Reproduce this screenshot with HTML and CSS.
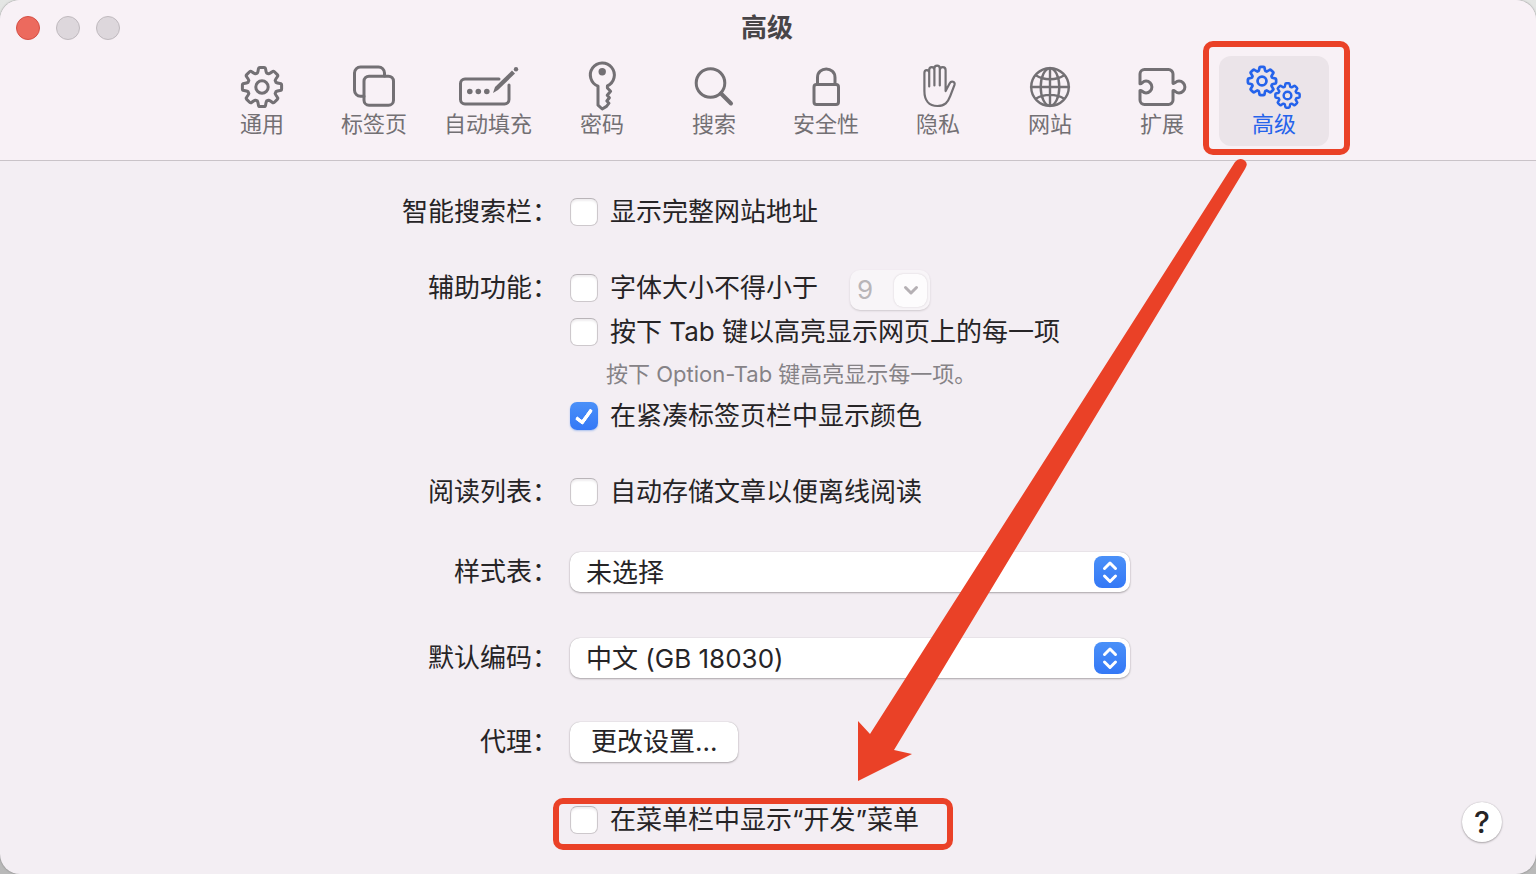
FILE: index.html
```
<!DOCTYPE html>
<html lang="zh-CN">
<head>
<meta charset="utf-8">
<meta name="viewport" content="width=device-width, initial-scale=1">
<title>高级</title>
<link rel="stylesheet" href="styles.css">
</head>
<body>
<svg class="defs" aria-hidden="true">
  <symbol id="gear" viewBox="-25 -25 50 50" overflow="visible">
    <path d="M-4.6-14 Q-4-15-3.6-18 Q-3.4-19.6-2-19.6 H2 Q3.4-19.6 3.6-18 Q4-15 4.6-14 L6.65-13.15 Q8-13.6 10.2-15.3 Q11.4-16.3 12.4-15.3 L15.3-12.4 Q16.3-11.4 15.3-10.2 Q13.6-8 13.15-6.65 L14-4.6 Q15-4 18-3.6 Q19.6-3.4 19.6-2 V2 Q19.6 3.4 18 3.6 Q15 4 14 4.6 L13.15 6.65 Q13.6 8 15.3 10.2 Q16.3 11.4 15.3 12.4 L12.4 15.3 Q11.4 16.3 10.2 15.3 Q8 13.6 6.65 13.15 L4.6 14 Q4 15 3.6 18 Q3.4 19.6 2 19.6 H-2 Q-3.4 19.6-3.6 18 Q-4 15-4.6 14 L-6.65 13.15 Q-8 13.6-10.2 15.3 Q-11.4 16.3-12.4 15.3 L-15.3 12.4 Q-16.3 11.4-15.3 10.2 Q-13.6 8-13.15 6.65 L-14 4.6 Q-15 4-18 3.6 Q-19.6 3.4-19.6 2 V-2 Q-19.6-3.4-18-3.6 Q-15-4-14-4.6 L-13.15-6.65 Q-13.6-8-15.3-10.2 Q-16.3-11.4-15.3-12.4 L-12.4-15.3 Q-11.4-16.3-10.2-15.3 Q-8-13.6-6.65-13.15 Z"/>
    <circle r="6.2"/>
  </symbol>
</svg>
<div class="window">
  <header class="header">
    <div class="titlebar">
      <div class="lights">
        <button class="light light-close" type="button" aria-label="关闭"></button>
        <button class="light" type="button" aria-label="最小化" disabled></button>
        <button class="light" type="button" aria-label="缩放" disabled></button>
      </div>
      <h1 class="title">高级</h1>
    </div>
    <nav class="toolbar">
      <button class="tool" type="button">
        <svg class="icon" viewBox="0 0 60 50"><use href="#gear" x="5" y="0" width="50" height="50"/></svg>
        <span>通用</span>
      </button>
      <button class="tool" type="button">
        <svg class="icon" viewBox="0 0 60 50"><path d="M20 34.3h-3.500a6 6 0 0 1-6-6v-17.300a6 6 0 0 1 6-6h18a6 6 0 0 1 6 6v3"/><rect x="20" y="14.200" width="29.500" height="29" rx="5"/></svg>
        <span>标签页</span>
      </button>
      <button class="tool tool-wide" type="button">
        <svg class="icon" viewBox="0 0 60 50"><path d="M41 17H7a4.500 4.500 0 0 0-4.500 4.500v16A4.500 4.500 0 0 0 7 42h39.500a4.500 4.500 0 0 0 4.500-4.500V23"/><g class="solid"><circle cx="11.800" cy="29.500" r="2.800"/><circle cx="20.300" cy="29.500" r="2.800"/><circle cx="28.800" cy="29.500" r="2.800"/><path d="M35 31l2-6L54 8.600l3 3L40 28z"/><circle cx="58" cy="7.300" r="2.200"/></g></svg>
        <span>自动填充</span>
      </button>
      <button class="tool" type="button">
        <svg class="icon" viewBox="0 0 60 50"><path d="M26 24.200a12 12 0 1 1 9.400-.3v2.100l3.200 3.300-3.400 4 2.200 2.400-2.600 3.300 2.200 2.200-2.500 3.200L30.200 47 26 43.200z"/><circle class="solid" cx="30.200" cy="9.700" r="3.700"/></svg>
        <span>密码</span>
      </button>
      <button class="tool" type="button">
        <svg class="icon" viewBox="0 0 60 50"><circle cx="26.500" cy="21" r="14.300"/><path class="handle" d="M37 31.500L47 41.500"/></svg>
        <span>搜索</span>
      </button>
      <button class="tool" type="button">
        <svg class="icon" viewBox="0 0 60 50"><rect x="18" y="22.500" width="24.500" height="20" rx="2.500"/><path d="M21.500 22v-6.500c0-11.500 17.500-11.500 17.500 0V22"/></svg>
        <span>安全性</span>
      </button>
      <button class="tool" type="button">
        <svg class="icon icon-thin" viewBox="0 0 60 50"><path d="M21.200 24.500V10.800c0-3.700-4.800-3.700-4.800 0V29c0 9.500 4.600 15 13 15 7.600 0 10.500-3.800 12.800-9.800l4.300-11.300c1-3.200-3.200-4.600-4.900-1.400l-4 7.500V10.500M21.200 11V8c0-3.900 5.200-3.900 5.200 0v15.500M26.400 8V6.600c0-4 5.400-4 5.400 0v16.900M31.800 8.200c0-4 5.800-4 5.800 0v3"/></svg>
        <span>隐私</span>
      </button>
      <button class="tool" type="button">
        <svg class="icon icon-globe" viewBox="0 0 60 50"><circle cx="30" cy="25" r="18.800"/><ellipse cx="30" cy="25" rx="9.300" ry="18.800"/><path d="M30 6v38M11 25h38M15.800 13.200c8 5.300 20.400 5.300 28.400 0M15.800 36.800c8-5.300 20.400-5.300 28.400 0"/></svg>
        <span>网站</span>
      </button>
      <button class="tool" type="button">
        <svg class="icon" viewBox="0 0 60 50"><path d="M8 21.800V12a4.500 4.500 0 0 1 4.500-4.500h24A4.500 4.500 0 0 1 41 12v9.300c1.800.8 2.400-2.200 6-2.200a5.900 5.900 0 0 1 0 11.800c-3.600 0-4.200-3-6-2.200V38a4.500 4.500 0 0 1-4.500 4.500h-24A4.500 4.500 0 0 1 8 38v-9.500c1.800-.8 2.400 2.400 6 2.400a5.900 5.900 0 0 0 0-11.800c-3.600 0-4.200 3.300-6 2.700z"/></svg>
        <span>扩展</span>
      </button>
      <button class="tool tool-active" type="button" aria-current="page">
        <svg class="icon" viewBox="0 0 60 50"><use class="gear-large" href="#gear" x="0" y="1" width="36" height="36"/><use class="gear-small" href="#gear" x="28" y="18" width="31" height="31"/></svg>
        <span>高级</span>
      </button>
    </nav>
  </header>

  <main class="content">
    <form class="form">
      <div class="section">
        <div class="name">智能搜索栏：</div>
        <div class="controls">
          <label class="row"><input class="check" type="checkbox"><span>显示完整网站地址</span></label>
        </div>
      </div>
      <div class="section">
        <div class="name">辅助功能：</div>
        <div class="controls">
          <div class="line">
            <label class="row"><input class="check" type="checkbox"><span>字体大小不得小于</span></label>
            <div class="combo">
              <input class="combo-value" type="text" value="9" aria-label="最小字体大小" disabled>
              <button class="combo-button" type="button" aria-label="选择字体大小" disabled>
                <svg class="chevron" viewBox="0 0 16 16"><path d="M2.500 5.500L8 11l5.500-5.500"/></svg>
              </button>
            </div>
          </div>
          <label class="row"><input class="check" type="checkbox" aria-describedby="tab-hint"><span>按下 Tab 键以高亮显示网页上的每一项</span></label>
          <p class="hint" id="tab-hint">按下 Option-Tab 键高亮显示每一项。</p>
          <label class="row"><input class="check" type="checkbox" checked><span>在紧凑标签页栏中显示颜色</span></label>
        </div>
      </div>
      <div class="section">
        <div class="name">阅读列表：</div>
        <div class="controls">
          <label class="row"><input class="check" type="checkbox"><span>自动存储文章以便离线阅读</span></label>
        </div>
      </div>
      <div class="section section-style">
        <label class="name" for="stylesheet">样式表：</label>
        <div class="popup">
          <select class="select" id="stylesheet"><option>未选择</option></select>
          <svg class="arrows" viewBox="0 0 32 32"><path d="M10.500 12.500L16 7l5.500 5.500M10.500 20L16 25.500 21.500 20"/></svg>
        </div>
      </div>
      <div class="section section-encoding">
        <label class="name" for="encoding">默认编码：</label>
        <div class="popup">
          <select class="select" id="encoding"><option>中文 (GB 18030)</option></select>
          <svg class="arrows" viewBox="0 0 32 32"><path d="M10.500 12.500L16 7l5.500 5.500M10.500 20L16 25.500 21.500 20"/></svg>
        </div>
      </div>
      <div class="section section-proxy">
        <div class="name">代理：</div>
        <div class="line"><button class="push" type="button">更改设置...</button></div>
      </div>
      <div class="section section-develop">
        <div class="name"></div>
        <div class="controls">
          <label class="row row-marked"><input class="check" type="checkbox"><span>在菜单栏中显示“开发”菜单</span></label>
        </div>
      </div>
    </form>
    <button class="help" type="button" aria-label="帮助">?</button>
  </main>
  <svg class="pointer" viewBox="0 0 400 630" aria-hidden="true"><path d="M385 12Q389 7 394 10Q399 13 395 19L44 600L62 604L8 631V571L20 584Z"/></svg>
</div>
</body>
</html>
```
FILE: styles.css
```
* {
  box-sizing: border-box;
}

body {
  margin: 0;
  background: linear-gradient(#e4e6e4, #b9b9b9);
  color: #262426;
  font-family: Inter, "Noto Sans CJK SC", sans-serif;
  font-size: 26px;
}

button,
input,
select {
  margin: 0;
  padding: 0;
  border: 0;
  color: inherit;
  font: inherit;
}

.defs {
  position: absolute;
  width: 0;
  height: 0;
}

.window {
  position: relative;
  display: flex;
  flex-direction: column;
  min-height: 100vh;
  overflow: hidden;
  border-radius: 20px;
  background: #f3eef3;
  box-shadow: 0 0 2px #777;
}

.header {
  padding-bottom: 14px;
  border-bottom: 1px solid #c9c3c8;
  background: #f8f1f6;
}

.titlebar {
  display: grid;
  grid-template-columns: 1fr auto 1fr;
  align-items: center;
  height: 56px;
  padding: 0 18px 0 16px;
}

.lights {
  display: flex;
  gap: 16px;
}

.light {
  width: 24px;
  height: 24px;
  border: 1px solid #bfb9be;
  border-radius: 50%;
  background: #ddd7dc;
}

.light-close {
  border-color: #d54f45;
  background: #ec6a5e;
}

.title {
  margin: 0;
  color: #484548;
  font-size: 26px;
  font-weight: 700;
  line-height: 56px;
}

.toolbar {
  display: flex;
  justify-content: center;
  gap: 2px;
}

.tool {
  position: relative;
  display: flex;
  flex-direction: column;
  align-items: center;
  width: 110px;
  height: 90px;
  padding-top: 6px;
  border-radius: 12px;
  background: none;
  color: #737074;
  font-size: 22px;
  line-height: 24px;
}

.tool-wide {
  width: 114px;
}

.icon {
  flex: none;
  width: 60px;
  height: 50px;
  overflow: visible;
  fill: none;
  stroke: currentColor;
  stroke-width: 3;
  stroke-linecap: round;
  stroke-linejoin: round;
}

.icon-thin {
  stroke-width: 2.2;
}

.icon-globe {
  stroke-width: 2.4;
}

.handle {
  stroke-width: 4;
}

.solid {
  fill: currentColor;
  stroke: none;
}

.gear-large {
  stroke-width: 3.8;
}

.gear-small {
  stroke-width: 4;
}

.tool-active {
  background: #ebe4e9;
  color: #2563eb;
}

.tool-active::after,
.row-marked::after {
  content: "";
  position: absolute;
  border: 6px solid #ea4127;
  border-radius: 10px;
  pointer-events: none;
}

.tool-active::after {
  inset: -15px -21px -9px -16px;
}

.content {
  display: grid;
  flex: 1;
  grid-template-columns: 1fr auto 1fr;
  align-items: start;
  padding: 29px 0 32px;
}

.form {
  grid-column: 2;
}

.section {
  display: grid;
  grid-template-columns: 156px 564px;
  column-gap: 12px;
  margin-bottom: 32px;
}

.name {
  line-height: 44px;
  text-align: right;
  white-space: nowrap;
}

.controls {
  display: flex;
  flex-direction: column;
  align-items: flex-start;
}

.line {
  display: flex;
  align-items: center;
  height: 44px;
}

.row {
  position: relative;
  display: flex;
  align-items: center;
  gap: 12px;
  height: 44px;
  line-height: 44px;
  white-space: nowrap;
}

.row-marked::after {
  inset: 0 -34px -8px -17px;
}

.check {
  appearance: none;
  width: 28px;
  height: 28px;
  border: 1px solid #cdc8cc;
  border-top-color: #b9b4b8;
  border-radius: 7px;
  background: #fff;
  box-shadow: inset 0 2px 2px #f0eef0;
}

.check:checked {
  position: relative;
  border: 0;
  background: linear-gradient(#4a90f8, #3478f6);
  box-shadow: 0 1px 2px #a9c0ee;
}

.check:checked::after {
  content: "";
  position: absolute;
  top: 4px;
  left: 9px;
  width: 6px;
  height: 14px;
  border: solid #fff;
  border-width: 0 4px 4px 0;
  border-radius: 2px;
  transform: rotate(36deg);
}

.combo {
  display: flex;
  align-items: center;
  width: 80px;
  height: 40px;
  margin: 4px 0 0 32px;
  padding: 3px;
  border-radius: 10px;
  background: #f8f5f8;
  box-shadow: 0 1px 2px #cfc9ce;
}

.combo-value {
  flex: 1;
  width: 0;
  padding: 0 0 2px 4px;
  background: none;
  color: #b9b5b8;
}

.combo-button {
  display: grid;
  place-items: center;
  width: 33px;
  height: 33px;
  border-radius: 9px;
  background: #fdfcfd;
  box-shadow: 0 0 2px #d2ccd1;
}

.chevron {
  width: 16px;
  height: 16px;
  fill: none;
  stroke: #b5b0b4;
  stroke-width: 3;
  stroke-linecap: round;
  stroke-linejoin: round;
}

.hint {
  margin: 0;
  padding-left: 36px;
  color: #858286;
  font-size: 22px;
  line-height: 40px;
}

.popup {
  position: relative;
  display: flex;
  align-items: center;
  width: 560px;
}

.select {
  appearance: none;
  width: 100%;
  height: 40px;
  padding: 0 44px 0 16px;
  border-radius: 10px;
  background: #fff;
  box-shadow: 0 0 1px #aaa5a9, 0 1px 2px #aaa5a9;
}

.arrows {
  position: absolute;
  right: 4px;
  width: 32px;
  height: 32px;
  border-radius: 8px;
  background: linear-gradient(#4a90f8, #3478f6);
  fill: none;
  stroke: #fff;
  stroke-width: 3;
  stroke-linecap: round;
  stroke-linejoin: round;
  pointer-events: none;
}

.push {
  height: 40px;
  padding: 0 21px;
  border-radius: 10px;
  background: #fff;
  box-shadow: 0 0 1px #aaa5a9, 0 1px 2px #aaa5a9;
  line-height: 40px;
}

.section-style {
  margin-top: 36px;
  margin-bottom: 42px;
}

.section-encoding {
  margin-bottom: 40px;
}

.section-proxy {
  margin-bottom: 34px;
}

.section-develop {
  margin-bottom: 0;
}

.help {
  grid-column: 3;
  align-self: end;
  justify-self: end;
  width: 40px;
  height: 40px;
  margin-right: 34px;
  border-radius: 50%;
  background: #fff;
  box-shadow: 0 0 1px #aaa5a9, 0 1px 2px #aaa5a9;
  font-size: 30px;
  font-weight: 500;
}

.pointer {
  position: absolute;
  top: 150px;
  left: calc(50% + 82px);
  width: 400px;
  height: 630px;
  overflow: visible;
  fill: #ea4127;
  pointer-events: none;
}
```
